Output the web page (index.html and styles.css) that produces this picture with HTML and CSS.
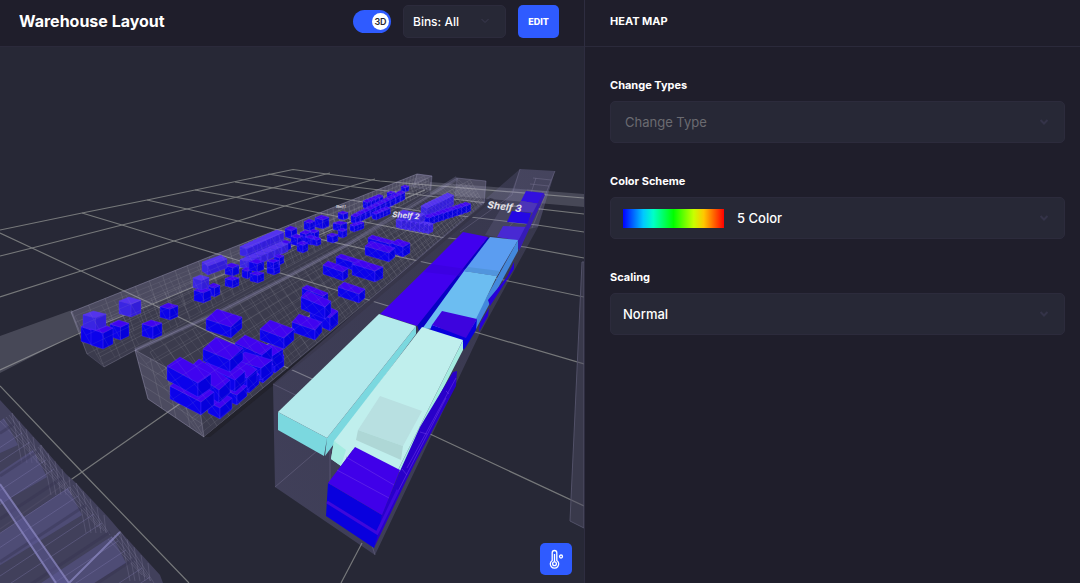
FILE: index.html
```html
<!DOCTYPE html>
<html lang="en">
<head>
<meta charset="utf-8">
<meta name="viewport" content="width=device-width, initial-scale=1">
<title>Warehouse Layout</title>
<link rel="stylesheet" href="styles.css">
</head>
<body>
<div class="app">
  <main class="workspace">
    <header class="bar">
      <h1 class="title">Warehouse Layout</h1>
      <label class="switch">
        <input class="switch-input" type="checkbox" checked aria-label="3D view">
        <span class="switch-knob">3D</span>
      </label>
      <div class="field-box">
        <select class="select select-small" aria-label="Bins"><option>Bins: All</option></select>
        <svg class="chevron chevron-small" viewBox="0 0 10 6"><path d="M1.500 1 5 4.500 8.500 1"/></svg>
      </div>
      <button class="edit" type="button">EDIT</button>
    </header>
    <section class="stage" aria-label="3D warehouse view">
      <svg class="scene" viewBox="0 47 584 536" preserveAspectRatio="xMidYMid slice">
        <defs>
          <linearGradient id="aisle" x1="0" y1="1" x2="1" y2="0">
            <stop offset="0" stop-color="#8a84c0" stop-opacity=".26"/>
            <stop offset="1" stop-color="#8a84c0" stop-opacity=".16"/>
          </linearGradient>
        </defs>
        <g class="floor">
          <path d="M0 230 82 213 147 200 195 190 293 169.500 380 181 584 198"/>
          <path d="M0 256 32 248 122 225 187 209 237 197 330 173"/>
          <path d="M0 297 81 271 174 241 238 221 285 206 375 179"/>
          <path d="M0 370 80 333 150 305 300 243 425 190"/>
          <path d="M0 529 82 472 178 405 318 310"/>
          <path d="M0 233 32 248 81 271 150 303 230 342 310 378 430 434 584 506"/>
          <path d="M82 213 122 225 174 241 227 257 300 279 385 305 475 332 584 364"/>
          <path d="M147 200 187 209 238 221 423 262 508 281 584 297"/>
          <path d="M195 190 285 206 440 237 525 247 584 258"/>
          <path d="M235 182 300 192 420 211 537 225 584 232"/>
          <path d="M268 174 330 184 470 201 584 214"/>
          <path d="M0 386 82 472 189 583M362 543 341 583"/>
        </g>
        <g class="strips">
          <path d="M0 336 72 310 80 332 0 373z"/>
          <path d="M430 182 584 194V207L430 194z"/>
        </g>
        <g class="rack">
          <path d="M71 312 417 174 432 176 430 192 350 243 287 277 217 313 136 350 104 367 87 354z"/>
          <path d="M71 312 417 174 432 176 300 243 80 332z"/>
          <path d="M417 174 432 176 431 190 413 187z"/>
        </g>
        <g id="mesh1" class="mesh"></g>
        <g id="boxes1"></g>
        <g id="veil1" class="mesh veil"></g>
        <g class="rack">
          <path d="M135 350 217 313 287 277 350 243 410 207 457 178 486 181 484 205 204 437 148 399z"/>
          <path d="M135 350 148 399 204 437 196 384z"/>
          <path d="M457 178 486 181 484 205 455 197z"/>
          <path class="edge" d="M135 350 217 313 287 277 350 243 410 207 457 178"/>
        </g>
        <g id="mesh2" class="mesh"></g>
        <path class="gap-shade" d="M204 437 323 340 490 198 494 199 330 339 210 437z"/>
        <g id="boxes2"></g>
        <g id="veil2" class="mesh veil"></g>
        <path class="aisle" d="M273 384 520 169 555 171 538 227 480 333 375 555 275 487z"/>
        <path class="aisle-face" d="M520 169 555 171 538 227 497 237 485 235 512 190z"/>
        <path class="aisle-line" d="M273 384 330 412 375 555M330 412 330 500M275 487 324 445M520 169 512 195 460 232M536 178 526 208 500 237M527 190 547 192M530 184 549 186M533 178 551 180M543 192 519 250M555 171 532 228"/>
        <g class="small-stack">
          <path fill="#3210df" d="M526 191 544 193 540 204 521 201z"/>
          <path fill="#4c35b8" d="M521 201 540 204 536 213 515 211z"/>
          <path fill="#2508e4" d="M512 211 531 213 528 224 507 222z"/>
          <path fill="#4829d3" d="M503 226 527 227 520 241 497 237z"/>
          <path fill="#361bb6" d="M543 193 545 195 519 251 517 243z"/>
        </g>
        <g class="lots">
          <path fill="#0700c4" d="M417 325 488 237 491 243 420 334z"/>
          <path fill="#4100ee" d="M380 314 431 264 463 232 488 237 417 326z"/>
          <path fill="#3700d5" opacity=".5" d="M431 264 466 269 460 276 424 272z"/>
          <path fill="#4388dc" d="M518 240 518 251 476 329 470 327z"/>
          <path fill="#5b9df1" d="M490 237 518 240 497 276 464 271z"/>
          <path fill="#6cbdf1" d="M464 271 497 276 472 327 422 329z"/>
          <path fill="#5195dd" d="M464 271 468 267 500 271 497 276z"/>
          <path fill="#2700d8" d="M507 277 514 262 514 269 490 306 488 300zM486 313 489 308 488 316 479 332 480 323z"/>
          <path fill="#0800dd" d="M432 325 466 337 464 349 430 330zM466 337 477 319 476 330 464 350z"/>
          <path fill="#3d04de" d="M442 311 477 319 466 338 432 325z"/>
          <path fill="#7bd8df" d="M278 412 327 438 324 456 278 430zM327 438 416 326 416 334 325 456z"/>
          <path fill="#b3e9ec" d="M278 412 379 314 416 326 327 438z"/>
          <path fill="#a5ece1" d="M334 441 345 446 341 466 331 459zM463 340 463 350 400 472 398 470z"/>
          <path fill="#c0efed" d="M334 441 422 327 463 340 398 470 345 446z"/>
          <path fill="#c0efed" d="M334 441 355 447 341 466z"/>
          <path fill="#a5ece1" d="M334 441 346 450 341 466 331 459z"/>
          <path fill="#b8e0e1" d="M380 396 422 411 403 446 358 430z"/>
          <path fill="#aed7d6" d="M358 430 403 446 401 460 356 440z"/>
          <path fill="#2900c9" d="M453 372 457 371 456 386 429 437 416 461 406 481 374 548 382 514 400 471 420 427z"/>
          <path class="seam" d="M446 391 449 394M420 432 427 434M402 469 407 475M456 378 407 468M446 398 390 507"/>
          <path fill="#0900de" d="M328 483 382 515 378 534 374 548 326 516z"/>
          <path fill="#4000e9" d="M355 447 400 470 382 515 328 483z"/>
          <path class="seam" d="M346 457 394 485M337 470 389 498"/>
          <path stroke="#3e08dc" stroke-width="3" d="M327 502 377 533 398 490"/>
        </g>
        <g id="bulk" class="bulk"></g>
        <path class="wall" d="M584 262 582 262 570 521 584 528z"/>
        <text class="tag tag-far" transform="translate(336 208)">Shelf 1</text>
        <text class="tag tag-mid" transform="translate(392 217) rotate(5)">Shelf 2</text>
        <text class="tag tag-near" transform="translate(487 208) rotate(7)">Shelf 3</text>
      </svg>
      <button class="heat" type="button" aria-label="Heat map">
        <svg class="heat-icon" viewBox="0 0 20 20">
          <path d="M6.200 11.500V3.800a2.300 2.300 0 0 1 4.600 0v7.700a4.200 4.200 0 1 1-4.600 0z"/>
          <circle cx="8.500" cy="14.800" r="1.900"/>
          <path d="M8.500 12.800V5"/>
          <circle cx="15" cy="7.500" r="1.500"/>
        </svg>
      </button>
    </section>
  </main>
  <aside class="panel">
    <header class="bar"><h2 class="panel-title">HEAT MAP</h2></header>
    <form class="form">
      <div class="field">
        <label class="label" for="type">Change Types</label>
        <div class="field-box">
          <select class="select select-empty" id="type"><option>Change Type</option></select>
          <svg class="chevron" viewBox="0 0 10 6"><path d="M1.500 1 5 4.500 8.500 1"/></svg>
        </div>
      </div>
      <div class="field">
        <label class="label" for="scheme">Color Scheme</label>
        <div class="field-box">
          <select class="select select-scheme" id="scheme"><option>5 Color</option></select>
          <svg class="chevron" viewBox="0 0 10 6"><path d="M1.500 1 5 4.500 8.500 1"/></svg>
        </div>
      </div>
      <div class="field">
        <label class="label" for="scaling">Scaling</label>
        <div class="field-box">
          <select class="select" id="scaling"><option>Normal</option></select>
          <svg class="chevron" viewBox="0 0 10 6"><path d="M1.500 1 5 4.500 8.500 1"/></svg>
        </div>
      </div>
    </form>
  </aside>
</div>
<script src="scene.js"></script>
</body>
</html>
```

FILE: styles.css
```css
* { box-sizing: border-box; }

body {
  margin: 0;
  background: #1f1e2b;
  color: #fff;
  font-family: "Inter", "Liberation Sans", sans-serif;
}

button, select { font-family: inherit; color: inherit; }

.app {
  display: grid;
  grid-template-columns: 585fr 495fr;
  min-height: 100vh;
}

.workspace {
  display: flex;
  flex-direction: column;
  min-width: 0;
  border-right: 1px solid #2e2d40;
}

.bar {
  display: flex;
  align-items: center;
  gap: 12px;
  height: 47px;
  padding: 0 25px 4px 19px;
  border-bottom: 1px solid #2b2a3b;
}

.title {
  margin: 0 auto 0 0;
  font-size: 16px;
  line-height: 20px;
  font-weight: 700;
  white-space: nowrap;
}

.switch { display: grid; align-items: center; }
.switch-input, .switch-knob { grid-area: 1 / 1; }

.switch-input {
  appearance: none;
  width: 38px;
  height: 23px;
  margin: 0;
  border-radius: 12px;
  background: #2f5bff;
}

.switch-knob {
  justify-self: end;
  width: 17px;
  margin-right: 2px;
  border-radius: 50%;
  background: #fff;
  color: #25242f;
  font-size: 9px;
  line-height: 17px;
  font-weight: 600;
  text-align: center;
}

.field-box { display: grid; align-items: center; }

.select {
  grid-area: 1 / 1;
  appearance: none;
  width: 100%;
  height: 42px;
  padding: 0 40px 0 12px;
  border: 1px solid #2c2b3c;
  border-radius: 5px;
  background-color: #272836;
  font-size: 13px;
  font-weight: 500;
}

.select-small { width: 103px; height: 33px; padding: 0 28px 0 9px; font-size: 12px; }
.select-empty { padding-left: 14px; color: #6b6b71; font-weight: 400; }

.select-scheme {
  padding-left: 126px;
  background-image: linear-gradient(90deg, #00f, #00c8ff 20%, #00ffc8 30%, #0f0 50%, #c8ff00 70%, #ffc800 80%, #f00);
  background-repeat: no-repeat;
  background-size: 101px 19px;
  background-position: 12px center;
}

.chevron {
  grid-area: 1 / 1;
  justify-self: end;
  width: 10px;
  height: 6px;
  margin-right: 16px;
  fill: none;
  stroke: #343348;
  stroke-width: 2;
  pointer-events: none;
}

.chevron-small { stroke: #3b3a50; stroke-width: 1; }

.edit {
  width: 41px;
  height: 33px;
  padding: 0;
  border: 0;
  border-radius: 5px;
  background: #2f5bff;
  font-size: 9px;
  font-weight: 800;
}

.stage {
  position: relative;
  flex: 1;
  min-height: 0;
  overflow: hidden;
  background: #272836;
}

.scene { position: absolute; inset: 0; width: 100%; height: 100%; fill: none; }

.floor { stroke: #76787a; stroke-width: 1.2; }
.strips { fill: #a8a8b4; fill-opacity: .26; }
.rack { fill: #a9a2c8; fill-opacity: .16; stroke: #a9a2d0; stroke-opacity: .16; stroke-width: 1; }
.edge { fill: none; stroke-opacity: .22; stroke-width: 4; }
.mesh { stroke: #b4b2be; stroke-opacity: .15; stroke-width: 1; }
.veil { stroke-opacity: .1; }
.gap-shade { fill: #22222c; }
.aisle { fill: url(#aisle); }
.aisle-face { fill: #8d86b8; fill-opacity: .16; }
.aisle-line { stroke: #8d88aa; stroke-opacity: .3; }
.seam { stroke: #713be8; stroke-opacity: .5; }
.bulk-base { fill: #45435f; fill-opacity: .9; }
.bulk-step { fill: #5c5890; fill-opacity: .5; }
.bulk-ray { stroke: #8b86bd; stroke-opacity: .3; }
.bulk-ray-dark { stroke: #34334f; stroke-opacity: .4; stroke-width: 3; }
.bulk-wire { stroke: #9a98b4; stroke-opacity: .22; }
.bulk-beam { stroke: #8f8ac4; stroke-opacity: .7; stroke-width: 2; }
.bulk-beam-fill { fill: #625da0; fill-opacity: .45; }
.wall { fill: #4b4a60; fill-opacity: .5; stroke: #525168; stroke-width: 1; }

.face-top { fill: #4003f0; }
.face-front { fill: #0b02eb; }
.face-side { fill: #0500dc; }
.box { stroke: #5a38ff; stroke-opacity: .3; stroke-width: 1; }
.box-faded .face-top { fill: #5434ec; }
.box-faded .face-front { fill: #3a25e2; }
.box-faded .face-side { fill: #321dd8; }

.tag { fill: #e4e2e8; font-weight: 700; font-style: italic; }
.tag-far { font-size: 3px; }
.tag-mid { font-size: 8px; }
.tag-near { font-size: 10px; }

.heat {
  position: absolute;
  right: 12px;
  bottom: 8px;
  display: grid;
  place-items: center;
  width: 32px;
  height: 32px;
  padding: 0;
  border: 0;
  border-radius: 5px;
  background: #2f5bff;
}

.heat-icon { width: 20px; height: 20px; fill: none; stroke: #fff; stroke-width: 1.3; }

.panel { min-width: 0; }
.panel .bar { padding-left: 25px; }

.panel-title {
  margin: 0;
  font-size: 11px;
  line-height: 16px;
  font-weight: 700;
}

.form {
  display: flex;
  flex-direction: column;
  gap: 30px;
  padding: 30px 15px 30px 25px;
}

.field { display: flex; flex-direction: column; gap: 8px; }
.label { font-size: 11px; line-height: 16px; font-weight: 700; }
```

FILE: scene.js
```js
const NS = "http://www.w3.org/2000/svg";

function add(parent, name, attrs) {
  const node = document.createElementNS(NS, name);
  for (const key in attrs) node.setAttribute(key, attrs[key]);
  parent.appendChild(node);
  return node;
}

function face(parent, cls, pts) {
  add(parent, "polygon", { class: cls, points: pts.map(p => p.join(",")).join(" ") });
}

// x, y: left corner of the lid; u: front edge; v: side edge; h: height
function box(parent, [x, y, ux, uy, vx, vy, h, faded]) {
  const g = add(parent, "g", { class: faded ? "box box-faded" : "box" });
  const a = [x, y], b = [x + ux, y + uy], c = [x + ux + vx, y + uy + vy], d = [x + vx, y + vy];
  const down = p => [p[0], p[1] + h];
  face(g, "face-front", [a, b, down(b), down(a)]);
  face(g, "face-side", [b, c, down(c), down(b)]);
  face(g, "face-top", [a, b, c, d]);
}

// Small carton described by its outer bounds
function carton(parent, [x0, y0, x1, y1, faded]) {
  const w = x1 - x0, h = y1 - y0;
  box(parent, [x0, y0 + h * 0.2, w * 0.55, h * 0.16, w * 0.45, -h * 0.2, h * 0.64, faded]);
}

function row(parent, n, x, y, dx, dy, w, h, faded) {
  for (let i = n - 1; i >= 0; i--) {
    carton(parent, [x + dx * i, y + dy * i, x + dx * i + w, y + dy * i + h, faded]);
  }
}

const mix = (a, b, t) => [a[0] + (b[0] - a[0]) * t, a[1] + (b[1] - a[1]) * t];

// Wire grid over a quad, with cells that shrink towards the far end
function mesh(parent, nearA, farA, nearB, farB, along, across, depth) {
  let d = "";
  for (let i = 0; i <= along; i++) {
    const t = i / along, s = depth * t / (1 + (depth - 1) * t);
    d += "M" + mix(nearA, farA, s).join(" ") + "L" + mix(nearB, farB, s).join(" ");
  }
  for (let j = 0; j <= across; j++) {
    const t = j / across;
    d += "M" + mix(nearA, nearB, t).join(" ") + "L" + mix(farA, farB, t).join(" ");
  }
  add(parent, "path", { d });
}

const mesh1 = document.getElementById("mesh1");
mesh(mesh1, [71, 312], [417, 174], [87, 354], [414, 190], 46, 4, 2.4);
mesh(mesh1, [88, 326], [428, 178], [104, 367], [430, 190], 46, 4, 2.4);
mesh(document.getElementById("veil1"), [75, 316], [424, 176], [102, 364], [430, 190], 60, 5, 2.4);
const mesh2 = document.getElementById("mesh2");
mesh(mesh2, [150, 352], [470, 180], [204, 437], [484, 204], 50, 9, 2.4);
mesh(mesh2, [135, 350], [148, 399], [196, 384], [204, 437], 4, 4, 1);
mesh(document.getElementById("veil2"), [137, 352], [459, 180], [200, 434], [484, 204], 64, 7, 2.4);

const b1 = document.getElementById("boxes1");
carton(b1, [401, 185, 409, 192]);
carton(b1, [387, 191, 395, 198]);
row(b1, 4, 363, 199, 4, -1.600, 8, 10);
row(b1, 10, 351, 213, 5, -2.500, 9, 11);
row(b1, 4, 372, 211, 3.500, -1.500, 8, 9);
row(b1, 3, 350, 223, 3, -1, 8, 9);
[[338,211,348,220],[315,215,329,229],[304,219,315,231],[285,226,297,239],[333,221,347,231],
 [338,228,347,238],[327,233,338,243],[309,229,319,240],[300,230,311,242],[291,234,303,246],
 [305,235,316,245],[297,241,308,253],[312,237,321,246],[280,240,291,251]].forEach(c => carton(b1, c));
row(b1, 8, 240, 244, 4.400, -2, 13, 13, true);
row(b1, 6, 240, 257, 7, -3, 13, 12, true);
[[274,254,284,265],[267,262,280,275],[242,267,252,279],
 [250,271,264,283],[249,259,264,272],[225,263,239,276],[225,276,239,288],[267,259,279,269]].forEach(c => carton(b1, c));
[[202,262,6,4,19,-7,9,true]].forEach(c => box(b1, c));
[[208,283,220,297],[194,287,211,303],[193,275,209,290,true],[160,303,178,320],[142,320,162,339],
 [119,297,141,317,true],[110,320,129,340],[81,322,101,345],[91,324,113,349],[83,311,106,330,true]].forEach(c => carton(b1, c));

const b2 = document.getElementById("boxes2");
row(b2, 7, 421, 203, 3.600, -1.700, 11, 15, true);
row(b2, 9, 424, 214, 4.600, -1.500, 10, 11);
row(b2, 7, 396, 217, 4.500, .8, 10, 12, true);
[[398,213,22,4,5,-3,6,true],
 [368,238,22,6,4,-3,7],[391,243,12,4,7,-4,10],[365,246,24,7,6,-5,9],
 [336,257,26,8,5,-3,8],[352,264,23,7,8,-4,11],[323,265,20,7,5,-4,9],
 [338,287,21,7,6,-5,9],[302,288,21,8,5,-3,10],[310,309,20,9,8,-7,13],[301,297,24,10,6,-6,12],
 [292,322,23,8,7,-8,10],[260,329,24,9,10,-9,11],[206,319,25,8,11,-10,11],
 [267,358,8,4,9,-7,11],[258,351,14,5,11,-7,12],[235,343,27,12,10,-8,12],
 [253,368,10,5,10,-9,10],[234,360,27,8,11,-8,12],
 [239,378,10,5,10,-9,10],[219,365,28,13,10,-9,12],
 [224,390,13,5,10,-9,10],[203,365,32,15,10,-9,12],[203,349,27,11,13,-12,12],
 [208,402,12,6,12,-10,11],[188,369,31,21,11,-10,13],
 [170,386,31,16,13,-10,13],[167,366,31,17,13,-9,14]].forEach(c => box(b2, c));

// Overlapping translucent pallets in the near corner
const bulk = document.getElementById("bulk");
add(bulk, "path", { class: "bulk-base", d: "M0 400 12 413 31 434 41 445 66 474 76 483 108 517 120 531 160 575 163 583H0z" });
[[12, 413], [41, 445], [76, 483], [120, 531]].forEach(([x, y]) => {
  // lit plane behind each step, running back towards the left edge
  const back = y + x * 0.66;
  add(bulk, "path", { class: "bulk-step", d: `M${x - 8} ${y + 5}L${x + 6} ${y + 32}L0 ${back + 32}V${back}z` });
  for (let i = 0; i < 5; i++) {
    add(bulk, "path", { class: "bulk-wire", d: `M${x - i * 3} ${y + i * 2}L${x + 34 - i * 3} ${y + 52 - i * 2}M${x + i * 7} ${y + i * 8}L${x + 10 + i * 5} ${y + 50}` });
  }
});
for (let i = 0; i < 24; i++) {
  const x = 14 + i * 8, y = 424 + i * 9, back = y + x * 0.66;
  add(bulk, "path", { class: i % 3 ? "bulk-ray" : "bulk-ray-dark", d: `M0 ${back}L${x} ${y}` });
}
add(bulk, "path", { class: "bulk-beam-fill", d: "M0 484 69 583H54L0 499z" });
add(bulk, "path", { class: "bulk-beam", d: "M0 484 69 583M0 499 56 583M69 583 120 532" });
```
